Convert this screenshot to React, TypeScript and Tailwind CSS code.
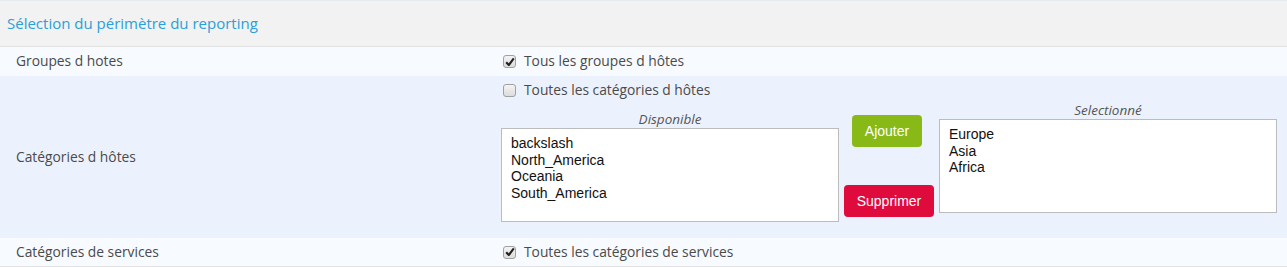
import React from "react";

function Check({ checked }: { checked: boolean }) {
  return (
    <span className="inline-flex h-[13px] w-[13px] items-center justify-center rounded-[3px] border border-[#a0a0a0] bg-gradient-to-b from-[#f4f4f4] to-[#dcdcdc]">
      {checked && (
        <svg width="10" height="10" viewBox="0 0 10 10">
          <path d="M1.2 5.2 L3.8 8 L8.8 1.4" fill="none" stroke="#222" strokeWidth="2.1" strokeLinejoin="round" />
        </svg>
      )}
    </span>
  );
}

function CheckLine({ checked, label }: { checked: boolean; label: string }) {
  return (
    <div className="flex h-[15px] items-center gap-[8px] pl-[3px]">
      <Check checked={checked} />
      <span>{label}</span>
    </div>
  );
}

function ListBox({ items }: { items: string[] }) {
  return (
    <div className="h-[94px] w-[338px] border border-[#bcbcbc] bg-white pl-[9px] pt-[6px] font-['Liberation_Sans',Arial,sans-serif] text-[14px] leading-[16.67px] text-[#111]">
      {items.map((i) => (
        <div key={i}>{i}</div>
      ))}
    </div>
  );
}

export default function App() {
  return (
    <div className="w-[1287px] font-['Open_Sans',sans-serif] text-[13.8px] text-[#4a4a4a]">
      <div className="h-[1px] bg-[#e6e9f0]" />
      <div className="flex h-[46px] items-center border-b border-[#e2e2e2] bg-[#f2f2f2] pl-[7px] text-[15px] text-[#2a9fd8]">
        Sélection du périmètre du reporting
      </div>
      <div className="flex h-[29px] items-center bg-[#f7faff]">
        <div className="w-[500px] pl-[16px]">Groupes d hotes</div>
        <CheckLine checked label="Tous les groupes d hôtes" />
      </div>
      <div className="flex items-stretch bg-[#ecf2fd]">
        <div className="flex w-[500px] items-center pl-[16px]">Catégories d hôtes</div>
        <div className="pb-[16px] pt-[7px]">
          <CheckLine checked={false} label="Toutes les catégories d hôtes" />
          <div className="mt-[3px] flex items-start">
            <div className="ml-[1px] mt-[9px]">
              <div className="h-[18px] text-center text-[13.5px] italic leading-[18px] text-[#555]">Disponible</div>
              <ListBox items={["backslash", "North_America", "Oceania", "South_America"]} />
            </div>
            <div className="flex w-[100px] flex-col items-center pt-[14px]">
              <button className="mr-[4px] h-[32px] w-[70px] rounded-[4px] bg-[#89b916] font-['Liberation_Sans',Arial,sans-serif] text-[14px] text-white">
                Ajouter
              </button>
              <button className="mt-[38px] h-[32px] w-[90px] rounded-[4px] bg-[#e00b3d] font-['Liberation_Sans',Arial,sans-serif] text-[14px] text-white">
                Supprimer
              </button>
            </div>
            <div>
              <div className="h-[18px] text-center text-[13.5px] italic leading-[18px] text-[#555]">Selectionné</div>
              <ListBox items={["Europe", "Asia", "Africa"]} />
            </div>
          </div>
        </div>
      </div>
      <div className="flex h-[29px] items-center border-b border-[#e2e2e2] bg-[#f7faff]">
        <div className="w-[500px] pl-[16px]">Catégories de services</div>
        <CheckLine checked label="Toutes les catégories de services" />
      </div>
    </div>
  );
}
